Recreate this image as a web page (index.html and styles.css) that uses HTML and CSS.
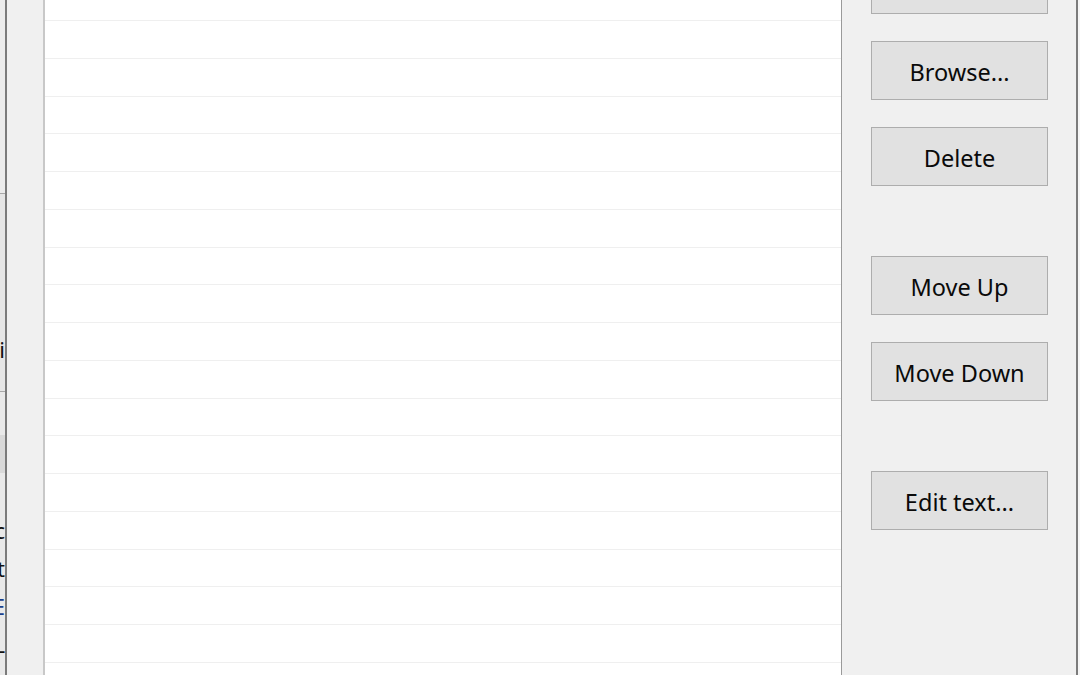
FILE: index.html
```html
<!DOCTYPE html>
<html lang="en">
<head>
<meta charset="utf-8">
<title>List editor</title>
<link rel="stylesheet" href="styles.css">
</head>
<body>
<div class="screen">
  <div class="behind">
    <div class="behind-head"></div>
    <div class="behind-field"><span class="frag">Pri</span></div>
    <div class="behind-band"></div>
    <div class="behind-lines">
      <span class="frag">Doc</span>
      <span class="frag">Set</span>
      <span class="frag link">OBE</span>
      <span class="frag">URL</span>
    </div>
  </div>
  <div class="dialog">
    <div class="listbox">
      <div class="rows">
        <div class="row"></div><div class="row"></div><div class="row"></div><div class="row"></div>
        <div class="row"></div><div class="row"></div><div class="row"></div><div class="row"></div>
        <div class="row"></div><div class="row"></div><div class="row"></div><div class="row"></div>
        <div class="row"></div><div class="row"></div><div class="row"></div><div class="row"></div>
        <div class="row"></div><div class="row"></div><div class="row"></div>
      </div>
    </div>
    <div class="actions">
      <div class="group">
        <button class="btn">Add...</button>
        <button class="btn">Browse...</button>
        <button class="btn">Delete</button>
      </div>
      <div class="group">
        <button class="btn">Move Up</button>
        <button class="btn">Move Down</button>
      </div>
      <div class="group">
        <button class="btn">Edit text...</button>
      </div>
    </div>
  </div>
  <div class="edge"></div>
</div>
</body>
</html>
```

FILE: styles.css
```css
html, body {
  margin: 0;
  padding: 0;
  width: 1080px;
  height: 675px;
  overflow: hidden;
  background: #f0f0f0;
}

.screen {
  display: flex;
  width: 1080px;
  height: 675px;
  overflow: hidden;
  font-family: "Noto Sans", "Open Sans", sans-serif;
}

/* window partially hidden behind the dialog */
.behind {
  width: 5px;
  flex: none;
  background: #e9e9e9;
  display: flex;
  flex-direction: column;
  overflow: hidden;
}

.behind-head {
  height: 193px;
  flex: none;
  border-bottom: 1px solid #a8a8a8;
  background: #ececec;
}

.behind-field {
  height: 198px;
  flex: none;
  border-bottom: 1px solid #a8a8a8;
  display: flex;
  align-items: center;
  justify-content: flex-end;
  box-sizing: border-box;
  padding-top: 112px;
  background: #e6e6e6;
}

.behind-band {
  margin-top: 43px;
  height: 38px;
  flex: none;
  background: #d9d9d9;
}

.behind-lines {
  display: flex;
  flex-direction: column;
  align-items: flex-end;
  padding-top: 43px;
  gap: 10px;
}

.frag {
  display: block;
  font-size: 22px;
  line-height: 28px;
  color: #111;
  white-space: nowrap;
  margin-left: -60px;
}

.frag.link {
  color: #1a3f8c;
}

.dialog {
  flex: none;
  width: 1073px;
  box-sizing: border-box;
  border-left: 2px solid #7b7b7b;
  border-right: 2px solid #7b7b7b;
  background: #f0f0f0;
  display: flex;
  padding-left: 36px;
}

.edge {
  flex: 1;
  background: #f6f6f6;
}

.listbox {
  width: 799px;
  flex: none;
  box-sizing: border-box;
  background: #ffffff;
  border-left: 2px solid #c8c8c8;
  border-right: 1px solid #9a9a9a;
  overflow: hidden;
}

.rows {
  margin-top: -16.75px;
}

.row {
  height: 37.75px;
  box-sizing: border-box;
  border-bottom: 1px solid #efefef;
}

.actions {
  flex: none;
  width: 177px;
  margin-left: 29px;
  margin-top: -45px;
  display: flex;
  flex-direction: column;
  gap: 70px;
}

.group {
  display: flex;
  flex-direction: column;
  gap: 27px;
}

.btn {
  display: block;
  width: 177px;
  height: 59px;
  box-sizing: border-box;
  margin: 0;
  padding: 2px 0 0;
  background: #e1e1e1;
  border: 1px solid #adadad;
  border-radius: 0;
  font-family: "Noto Sans", "Open Sans", sans-serif;
  font-size: 23.5px;
  color: #0a0a0a;
  text-align: center;
}
```
